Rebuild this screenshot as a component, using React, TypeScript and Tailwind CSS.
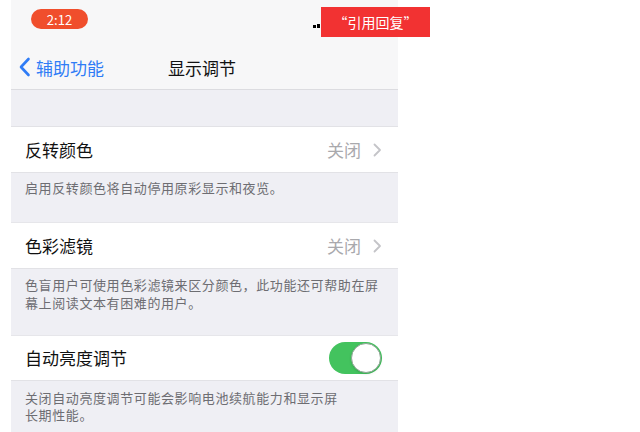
import React from "react";

const font = { fontFamily: '"Noto Sans CJK SC", "Noto Sans", sans-serif' };

function Chevron() {
  return (
    <svg width="9" height="14" viewBox="0 0 9 14" className="ml-[12px]">
      <path d="M1.5 1.5 L7 7 L1.5 12.5" fill="none" stroke="#c4c4c8" strokeWidth="1.8" strokeLinecap="round" strokeLinejoin="round" />
    </svg>
  );
}

export default function App() {
  return (
    <div className="relative w-[640px] h-[432px] bg-white overflow-hidden" style={font}>
      <div className="ml-[11px] w-[387px] h-[432px] bg-[#efeff4] flex flex-col">
        {/* status bar */}
        <div className="h-[46px] bg-[#f7f7f8] relative shrink-0">
          <div className="absolute left-[20px] top-[9px] w-[57px] h-[20px] rounded-full bg-[#f04e2c] flex items-center justify-center text-white text-[13px] leading-none">
            2:12
          </div>
          <div className="absolute left-[302px] top-[24px] flex items-end gap-[1px]">
            <div className="w-[3px] h-[3px] bg-black" />
            <div className="w-[3px] h-[4px] bg-black" />
          </div>
        </div>
        {/* nav bar */}
        <div className="h-[44px] bg-[#f7f7f8] border-b border-[#dcdce0] flex items-center relative shrink-0">
          <svg width="13" height="20" viewBox="0 0 13 20" className="ml-[7px] mt-[-2px]">
            <path d="M10.5 2 L3 10 L10.5 18" fill="none" stroke="#2f7cf6" strokeWidth="2.6" strokeLinecap="round" strokeLinejoin="round" />
          </svg>
          <span className="ml-[5px] text-[17px] text-[#2f7cf6] leading-none">辅助功能</span>
          <span className="absolute left-[157px] text-[17px] text-[#111] leading-none">显示调节</span>
        </div>
        <div className="h-[37px] border-b border-[#e2e2e6] shrink-0" />
        {/* row 1 */}
        <div className="h-[46px] bg-white flex items-center px-[14px] border-b border-[#e2e2e6] shrink-0">
          <span className="text-[17px] text-[#111] flex-1">反转颜色</span>
          <span className="text-[17px] text-[#a9a9ad]">关闭</span>
          <Chevron />
          <span className="w-[2px]" />
        </div>
        <div className="h-[50px] px-[14px] pt-[6px] text-[13px] tracking-[0.6px] leading-[18px] text-[#6d6d72] shrink-0 border-b border-[#e6e6ea]">
          启用反转颜色将自动停用原彩显示和夜览。
        </div>
        {/* row 2 */}
        <div className="h-[46px] bg-white flex items-center px-[14px] border-b border-[#e2e2e6] shrink-0">
          <span className="text-[17px] text-[#111] flex-1">色彩滤镜</span>
          <span className="text-[17px] text-[#a9a9ad]">关闭</span>
          <Chevron />
          <span className="w-[2px]" />
        </div>
        <div className="h-[67px] px-[14px] pt-[7px] text-[13px] tracking-[0.6px] leading-[18px] text-[#6d6d72] shrink-0 border-b border-[#e6e6ea]">
          色盲用户可使用色彩滤镜来区分颜色，此功能还可帮助在屏幕上阅读文本有困难的用户。
        </div>
        {/* row 3 */}
        <div className="h-[45px] bg-white flex items-center px-[14px] border-b border-[#e2e2e6] shrink-0">
          <span className="text-[17px] text-[#111] flex-1">自动亮度调节</span>
          <div className="w-[53px] h-[32px] rounded-full bg-[#43c35e] relative mr-[2px]">
            <div className="absolute right-[1px] top-[1px] w-[30px] h-[30px] rounded-full bg-white border border-[#8fa595] shadow" />
          </div>
        </div>
        <div className="pl-[14px] pt-[8px] pr-[53px] text-[13px] tracking-[0.6px] leading-[17px] text-[#6d6d72]">
          关闭自动亮度调节可能会影响电池续航能力和显示屏长期性能。
        </div>
      </div>
      {/* red banner */}
      <div className="absolute left-[321px] top-[7px] w-[109px] h-[30px] bg-[#f23232] flex items-center justify-center text-white text-[14px] leading-none">
        “引用回复”
      </div>
    </div>
  );
}
